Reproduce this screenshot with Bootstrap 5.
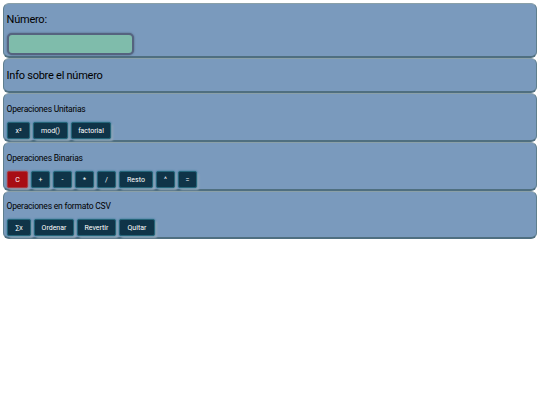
<!DOCTYPE html>
<html lang="es"><head><meta charset="utf-8">
<link href="https://cdn.jsdelivr.net/npm/bootstrap@5.3.0/dist/css/bootstrap.min.css" rel="stylesheet">
<style>
html,body{background:#fff}
body{font-family:Roboto,sans-serif;margin:0;padding:3px 3px 0 3px;color:#000}
.panel-box{background:#7a9abd;border:1px solid #5f7f8f;border-bottom:2px solid #4f6f80;border-top-color:#8aa0a8;border-radius:6px;padding:5px 3px 3px 2.6px}
.head-big{font-size:11px;letter-spacing:-.25px;line-height:16px;margin:0}
.head-small{font-size:8.5px;letter-spacing:-.2px;line-height:12px;margin:0}
.num-input{width:127px;height:22px;background:#7fbcab;border:2px solid #55637f;border-radius:5px;box-shadow:0 0 2px #49607a;display:block;padding:0;margin-left:.4px}
.box-a{height:55px;padding-top:8px}
.box-a .num-input{margin-top:5px}
.box-b{height:35px;padding-top:9px}
.box-c{height:49px;padding-top:9px}
.box-d{height:49px;padding-top:9px}
.box-e{height:48px;padding-top:8px}
.key-row{margin-top:7px;gap:3px;margin-left:.4px}
.key{background:#0f3448;color:#fff;border:1px solid #246579;border-radius:2px;font-size:7px;line-height:14px;height:17px;padding:0;font-family:Roboto,sans-serif;box-shadow:0 0 2px #1f6f88,2px 2px 2px #95a9bb;font-weight:400}
.key.danger{background:#a80d14;border-color:#a83a42;box-shadow:0 0 2px #a04050,2px 2px 2px #95a9bb}
.w19{width:19px}.w21{width:21px}.w23{width:23px}.w24{width:24px}.w34{width:34px}.w35{width:35px}.w36{width:36px}.w39{width:39px}.w40{width:40px}
</style></head><body>
<div class="d-flex flex-column">
<div class="panel-box box-a"><p class="head-big">Número:</p><input class="num-input" type="text" aria-label="Número"></div>
<div class="panel-box box-b"><p class="head-big">Info sobre el número</p></div>
<div class="panel-box box-c"><p class="head-small">Operaciones Unitarias</p>
<div class="d-flex key-row"><button class="key w23">x²</button><button class="key w35">mod()</button><button class="key w40">factorial</button></div></div>
<div class="panel-box box-d"><p class="head-small">Operaciones Binarias</p>
<div class="d-flex key-row"><button class="key danger w21">C</button><button class="key w19">+</button><button class="key w19">-</button><button class="key w19">*</button><button class="key w19">/</button><button class="key w34">Resto</button><button class="key w19">^</button><button class="key w19">=</button></div></div>
<div class="panel-box box-e"><p class="head-small">Operaciones en formato CSV</p>
<div class="d-flex key-row"><button class="key w24">∑x</button><button class="key w40">Ordenar</button><button class="key w39">Revertir</button><button class="key w36">Quitar</button></div></div>
</div>
<script src="https://cdn.jsdelivr.net/npm/bootstrap@5.3.0/dist/js/bootstrap.bundle.min.js"></script>
</body></html>
